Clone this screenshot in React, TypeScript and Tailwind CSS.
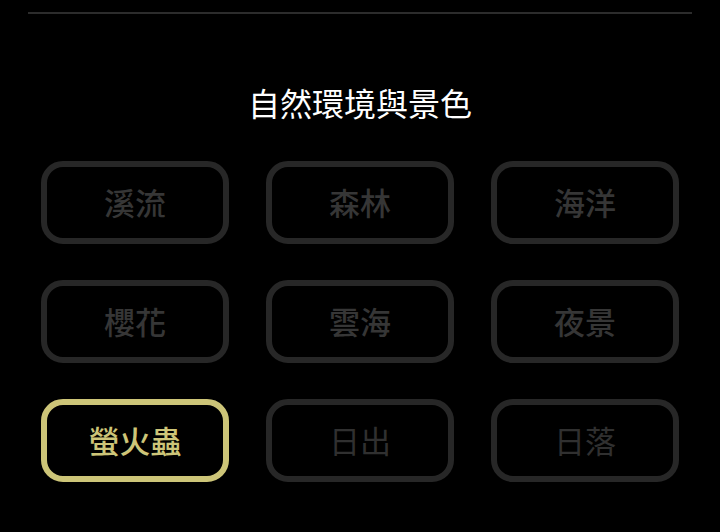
const items = [
  { label: "溪流", state: "idle" },
  { label: "森林", state: "idle" },
  { label: "海洋", state: "idle" },
  { label: "櫻花", state: "idle" },
  { label: "雲海", state: "idle" },
  { label: "夜景", state: "idle" },
  { label: "螢火蟲", state: "active" },
  { label: "日出", state: "disabled" },
  { label: "日落", state: "disabled" },
];

export default function App() {
  return (
    <div
      className="min-h-screen w-full bg-black"
      style={{ fontFamily: '"Noto Sans CJK TC", "Noto Sans", sans-serif' }}
    >
      <div className="pt-3 mx-[28px]">
        <div className="h-[2px] bg-[#2c2c2c]" />
      </div>

      <h1 className="mt-[67px] text-center text-[32px] leading-[42px] font-normal text-white">
        自然環境與景色
      </h1>

      <div className="mt-[38px] grid grid-cols-3 gap-x-[37px] gap-y-[36px] px-[41px]">
        {items.map((it) => (
          <button
            key={it.label}
            className={
              it.state === "active"
                ? "h-[83px] rounded-[22px] border-[6px] border-[#cdc578] text-[31px] font-medium text-[#cdc578] flex items-center justify-center"
                : it.state === "disabled"
                ? "h-[83px] rounded-[22px] border-[6px] border-[#272727] text-[31px] font-normal text-[#303030] flex items-center justify-center"
                : "h-[83px] rounded-[22px] border-[6px] border-[#272727] text-[31px] font-medium text-[#363636] flex items-center justify-center"
            }
          >
            {it.label}
          </button>
        ))}
      </div>
    </div>
  );
}
